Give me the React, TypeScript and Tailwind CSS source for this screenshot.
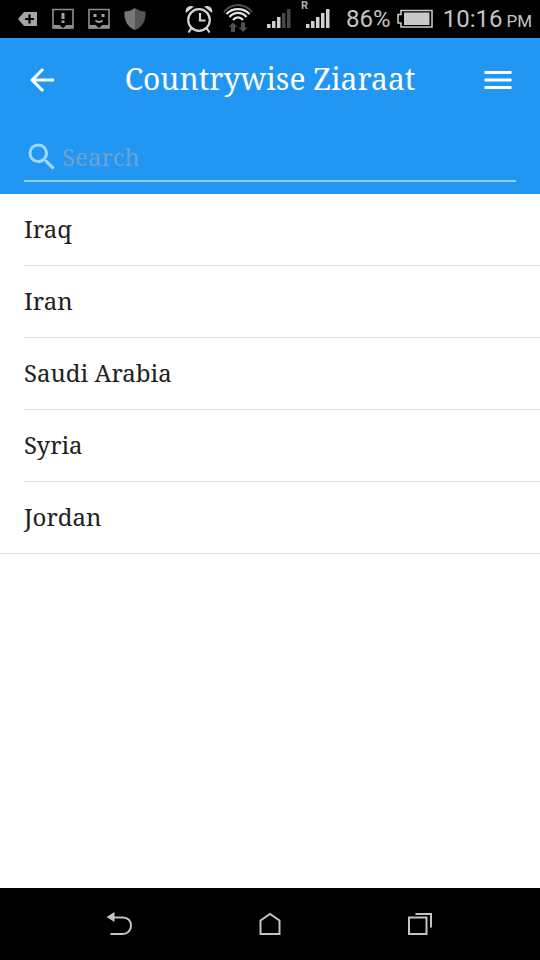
import { useState } from 'react';

const countries = ['Iraq', 'Iran', 'Saudi Arabia', 'Syria', 'Jordan'];

function StatusBar() {
  return (
    <div className="flex h-[38px] items-center justify-between bg-black pl-4 pr-2 font-['Roboto',sans-serif] text-2xl text-[#c4c4c4]">
      <div className="flex gap-3.5">
        <svg width="22" height="38" viewBox="0 0 22 38">
          <path d="M2 19 8 12H21V26H8Z" fill="#a5a5a5" />
          <path d="M13.500 14.500V23.500M9 19H18" stroke="#000" strokeWidth="2.200" />
        </svg>
        <svg width="22" height="38" viewBox="0 0 22 38" fill="none">
          <path d="M1 9.500H21V28H1Z" stroke="#8f8f8f" strokeWidth="1.600" />
          <path d="M1 25H8L11 28L14 25H21V28.500H1Z" fill="#8f8f8f" />
          <path d="M8 25H14L11 28Z" fill="#000" />
          <path d="M11 13V19M11 20.500V23" stroke="#a5a5a5" strokeWidth="3" />
        </svg>
        <svg width="22" height="38" viewBox="0 0 22 38" fill="none">
          <path d="M1 9.500H21V28H1Z" stroke="#8f8f8f" strokeWidth="1.600" />
          <path d="M1 25H8L11 28L14 25H21V28.500H1Z" fill="#8f8f8f" />
          <path d="M8 25H14L11 28Z" fill="#000" />
          <path d="M5.500 15.500H8.500M13.500 15.500H16.500" stroke="#a5a5a5" strokeWidth="3" />
          <path d="M7.500 20.500Q11 23.500 14.500 20.500" stroke="#a5a5a5" strokeWidth="1.800" />
        </svg>
        <svg width="22" height="38" viewBox="0 0 22 38">
          <path d="M11 8Q16 11.500 21.500 11.500C22 20 19 27 11 30Z" fill="#555" />
          <path d="M11 8Q6 11.500 .5 11.500C0 20 3 27 11 30Z" fill="#777" />
        </svg>
      </div>
      <div className="flex items-center">
        <svg width="28" height="38" viewBox="0 0 28 38" fill="none" stroke="#d4d4d4" strokeWidth="2.200">
          <circle cx="14" cy="20" r="10.800" />
          <path d="M15 13V20.500H20.500M6.500 28 3.500 32.500M21.500 28 24.500 32.500" />
          <path d="M1 13C-.5 8 4 4.500 9 6.500ZM27 13C28.500 8 24 4.500 19 6.500Z" fill="#d4d4d4" stroke="none" />
        </svg>
        <svg width="30" height="38" viewBox="0 0 30 38" className="ml-2.5" fill="none" strokeWidth="2">
          <path d="M1 12C8 2.500 22 2.500 29 12" stroke="#505050" />
          <path d="M3.500 14C9.500 7.500 20.500 7.500 26.500 14M6.500 17C11 11.500 19 11.500 23.500 17M10 20C13 16.500 17 16.500 20 20" stroke="#e4e4e4" strokeWidth="2.200" />
          <path d="M10 22.500 14.500 27H12V32H8V27H5.500ZM20 32 15.500 27.500H18V22.500H22V27.500H24.500Z" fill="#505050" />
        </svg>
        <svg width="24" height="38" viewBox="0 0 24 38" className="ml-3.5">
          <path d="M0 24H3.500V28H0ZM5 21H8.500V28H5ZM10 17H13.500V28H10Z" fill="#d0d0d0" />
          <path d="M15 13H18.500V28H15ZM20 9H23.500V28H20Z" fill="#484848" />
        </svg>
        <svg width="29" height="38" viewBox="0 0 29 38" className="ml-2.5">
          <path d="M5 24H8.500V28H5ZM10 21H13.500V28H10ZM15 17H18.500V28H15ZM20 13H23.500V28H20ZM25 9H28.500V28H25Z" fill="#d0d0d0" />
          <text x="0" y="9" fontSize="11" fontWeight="700" fill="#b0b0b0">R</text>
        </svg>
        <span className="ml-4">86%</span>
        <svg width="36" height="38" viewBox="0 0 36 38" className="ml-1.5" fill="none">
          <path d="M4 10.500H35V27H4V23H1V14.500H4Z" stroke="#c8c8c8" strokeWidth="1.600" />
          <path d="M7 12.500H32.500V25H7Z" fill="#c8c8c8" />
        </svg>
        <span className="ml-2.5">10:16</span>
        <span className="ml-1 pt-1 text-[17px]">PM</span>
      </div>
    </div>
  );
}

function NavBar() {
  return (
    <nav className="flex h-[72px] items-center justify-around bg-black px-11">
      <button aria-label="Back">
        <svg width="28" height="28" viewBox="0 0 28 28" fill="none">
          <path d="M7 7.500H18C23 7.500 26 11 26 15.500C26 20 23 24 18 24H5.500" stroke="#c4c4c4" strokeWidth="2" />
          <path d="M1.500 7 9.500 2V12Z" fill="#c4c4c4" />
        </svg>
      </button>
      <button aria-label="Home">
        <svg width="28" height="28" viewBox="0 0 28 28" fill="none" stroke="#c4c4c4" strokeWidth="2">
          <path d="M4.500 24V10.500L14 4L23.500 10.500V24Z" />
        </svg>
      </button>
      <button aria-label="Recent apps">
        <svg width="28" height="28" viewBox="0 0 28 28" fill="none" stroke="#c4c4c4" strokeWidth="2">
          <path d="M2 7.500H19.500V24H2ZM8.500 4H24V17.500" />
        </svg>
      </button>
    </nav>
  );
}

export default function App() {
  const [query, setQuery] = useState('');
  const shown = countries.filter((c) => c.toLowerCase().includes(query.toLowerCase()));

  return (
    <div className="flex min-h-screen flex-col bg-white font-['Noto_Serif','DejaVu_Serif',serif]">
      <StatusBar />
      <header className="bg-[#2196f3] px-6 pb-3 text-white">
        <div className="flex h-[84px] items-center justify-between">
          <button aria-label="Back">
            <svg width="36" height="36" viewBox="0 0 24 24" fill="currentColor">
              <path d="M20 11H7.830l5.590-5.590L12 4l-8 8 8 8 1.410-1.410L7.830 13H20v-2z" />
            </svg>
          </button>
          <h1 className="pb-0.5 text-3xl">Countrywise Ziaraat</h1>
          <button aria-label="Menu">
            <svg width="36" height="36" viewBox="0 0 24 24" fill="currentColor">
              <path d="M3 18h18v-2H3v2zm0-5h18v-2H3v2zm0-7v2h18V6H3z" />
            </svg>
          </button>
        </div>
        <label className="flex h-[60px] items-center gap-0.5 border-b-2 border-[#90d0fb] pt-3">
          <svg width="36" height="36" viewBox="0 0 24 24" fill="#a0d8fc">
            <path d="M15.500 14h-.790l-.280-.270A6.471 6.471 0 0 0 16 9.500 6.500 6.500 0 1 0 9.500 16c1.610 0 3.090-.590 4.230-1.570l.270.280v.790l5 4.990L20.490 19l-4.990-5zm-6 0C7.010 14 5 11.990 5 9.500S7.010 5 9.500 5 14 7.010 14 9.500 11.990 14 9.500 14z" />
          </svg>
          <input
            type="text"
            aria-label="Search"
            placeholder="Search"
            value={query}
            onChange={(e) => setQuery(e.target.value)}
            className="min-w-0 flex-1 bg-transparent text-2xl outline-none placeholder:text-[#6ea3cf]"
          />
        </label>
      </header>
      <main className="flex-1">
        <ul className="border-b border-[#e4e4e4] text-2xl text-[#212121]">
          {shown.map((name) => (
            <li key={name} className="ml-6 flex h-[72px] items-center border-b border-[#e4e4e4] pb-0.5 last:h-[71px] last:border-b-0">
              {name}
            </li>
          ))}
        </ul>
      </main>
      <NavBar />
    </div>
  );
}
